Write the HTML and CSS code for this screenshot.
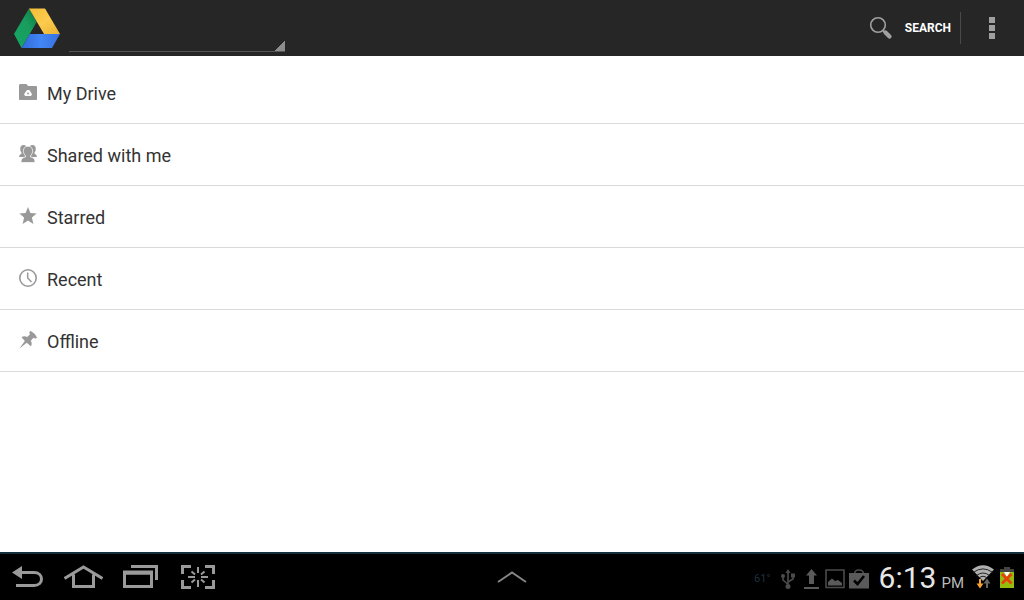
FILE: index.html
```html
<!DOCTYPE html>
<html lang="en">
<head>
  <meta charset="UTF-8" />
  <meta name="viewport" content="width=device-width, initial-scale=1" />
  <title>Drive</title>
  <link rel="stylesheet" href="styles.css">
</head>
<body>

<header class="action-bar">
  <svg class="logo" width="46" height="40" viewBox="0 0 46 40">
    <defs>
      <linearGradient id="green" x1="0" y1="1" x2="1" y2="0">
        <stop offset="0" stop-color="#16a765" />
        <stop offset="0.6" stop-color="#189c5c" />
        <stop offset="1" stop-color="#0d7443" />
      </linearGradient>
      <linearGradient id="yellow" x1="0" y1="0" x2="1" y2="1">
        <stop offset="0" stop-color="#f3bd38" />
        <stop offset="0.5" stop-color="#fdcb4d" />
        <stop offset="1" stop-color="#e9b234" />
      </linearGradient>
      <linearGradient id="blue" x1="0" y1="0" x2="1" y2="0">
        <stop offset="0" stop-color="#2f6bd6" />
        <stop offset="0.5" stop-color="#4285f4" />
        <stop offset="1" stop-color="#3771e0" />
      </linearGradient>
    </defs>
    <path d="M15 .5 22.700 14 7.500 40 0 26z" fill="url(#green)" />
    <path d="M15 .5H31L46 26H30z" fill="url(#yellow)" />
    <path d="M15.700 26H46L38 40H7.500z" fill="url(#blue)" />
  </svg>
  <select class="account" aria-label="Account">
    <option></option>
  </select>
  <button class="search">
    <svg width="24" height="24" viewBox="0 0 24 24">
      <circle cx="9" cy="9" r="7.300" fill="none" stroke="#a0a0a0" stroke-width="1.600" />
      <path d="M14 14.500l2 2" stroke="#a0a0a0" stroke-width="2" />
      <path d="M16.500 16.500l4 4" stroke="#a0a0a0" stroke-width="4.200" stroke-linecap="round" />
    </svg>
    <span>SEARCH</span>
  </button>
  <button class="overflow" aria-label="More options">
    <svg width="6" height="22" viewBox="0 0 6 22" fill="#a0a0a0">
      <path d="M0 0h6v6H0zM0 8h6v6H0zM0 16h6v6H0z" />
    </svg>
  </button>
</header>

<main class="content">
  <ul class="folders">
    <li><a href="#">
      <svg width="18" height="18" viewBox="0 0 18 18" fill="#999">
        <path d="M0 2.500Q0 1 1 1H7.500L9 3H17Q18 3 18 4V16Q18 17 17 17H1Q0 17 0 16z" />
        <path d="M8 7H10.500L13 11.200 12 13H6.200L5 11.200z" fill="#fff" />
        <path d="M9 9 10.300 11.200H7.800z" />
      </svg>
      My Drive
    </a></li>
    <li><a href="#">
      <svg width="18" height="18" viewBox="0 0 18 18" fill="#999">
        <path d="M4.500 0C7 0 8 1.500 7.500 4.500L6 9V12H0Q0 9.500 2.500 8.500V7.500Q1 5.500 1.200 3.500 1.500 0 4.500 0z" />
        <path d="M13.500 0C11 0 10 1.500 10.500 4.500L12 9V12H18Q18 9.500 15.500 8.500V7.500Q17 5.500 16.800 3.500 16.500 0 13.500 0z" />
        <path d="M9 1.200C12 1.200 13.800 3.200 13.600 6.300 13.500 8.300 12.600 9.500 11.600 10.800V12C14.700 12.800 15.900 13.600 16 17.500H2C2.100 13.600 3.300 12.800 6.400 12V10.800C5.400 9.500 4.500 8.300 4.400 6.300 4.200 3.200 6 1.200 9 1.200z" stroke="#fff" stroke-width="0.700" />
      </svg>
      Shared with me
    </a></li>
    <li><a href="#">
      <svg width="18" height="18" viewBox="0 0 18 18" fill="#999">
        <path d="M9 0 11.400 6 17.700 6.400 12.900 10.600 14.400 17 9 13.600 3.600 17 5.100 10.600 .3 6.400 6.600 6z" />
      </svg>
      Starred
    </a></li>
    <li><a href="#">
      <svg width="18" height="18" viewBox="0 0 18 18" fill="none" stroke="#999">
        <circle cx="9" cy="9" r="8.200" stroke-width="1.600" />
        <path d="M8.700 3.500V9L12.500 13" stroke-width="1.500" />
      </svg>
      Recent
    </a></li>
    <li><a href="#">
      <svg width="18" height="18" viewBox="0 0 18 18" fill="#999">
        <path d="M11.200 0C13.500 .5 17.300 4 18 7 16.800 7.800 15.500 7.500 14.500 6.800L11.800 9.700C13 11.500 13 13.700 11.900 15.200L7.700 11.800 .3 17.700 5.800 9.900 2.500 6.300C4.200 5 6.500 5.100 8.200 6.100L11 3.300C10.200 2.200 10.200 .8 11.200 0z" />
      </svg>
      Offline
    </a></li>
  </ul>
</main>

<footer class="system-bar">
  <nav class="nav-keys">
    <button aria-label="Back">
      <svg width="32" height="24" viewBox="0 0 32 24">
        <path d="M8 7.500H22C32 7.500 32 20.500 22 20.500H4" fill="none" stroke="#9a9a9a" stroke-width="3" />
        <path d="M0 7.500 10 1V14z" fill="#9a9a9a" />
      </svg>
    </button>
    <button aria-label="Home">
      <svg width="39" height="24" viewBox="0 0 39 24" fill="none" stroke="#9a9a9a" stroke-width="3">
        <path d="M.5 13.500 19.500 2 38.500 13.500M9.500 9.500V21.500H29.500V9.500" />
      </svg>
    </button>
    <button aria-label="Recent apps">
      <svg width="35" height="24" viewBox="0 0 35 24" fill="none" stroke="#9a9a9a" stroke-width="3">
        <path d="M8 1.500H33.500V15" />
        <path d="M1.500 8H28.500V21.500H1.500z" />
        <path d="M0 7.500H30" stroke-width="4" />
      </svg>
    </button>
    <button aria-label="Screenshot">
      <svg width="34" height="24" viewBox="0 0 34 24" fill="none" stroke="#9a9a9a">
        <path d="M1.500 9V1.500H10M24 1.500H32.500V9M32.500 15V22.500H24M10 22.500H1.500V15" stroke-width="3" />
        <path d="M17 2V8M17 15V22M7 12H14M20 12H27M10.500 6.500 14 9.500M23.500 6.500 20 9.500M10.500 17.500 14 14.500M23.500 17.500 20 14.500" stroke-width="2" />
      </svg>
    </button>
  </nav>

  <button class="tray" aria-label="Open tray">
    <svg width="30" height="12" viewBox="0 0 30 12" fill="none" stroke="#858585" stroke-width="2">
      <path d="M1 11 15 1.500 29 11" />
    </svg>
  </button>

  <div class="status">
    <span class="temp">61°</span>
    <svg width="14" height="20" viewBox="0 0 14 20" fill="#4b4b4b">
      <path d="M7 2V17M7 15.500 2 11V7M7 13 12 10V6" fill="none" stroke="#4b4b4b" stroke-width="1.600" />
      <path d="M7 0 9.500 4H4.500zM10 4.500h4v4h-4z" />
      <circle cx="2" cy="7" r="2" />
      <circle cx="7" cy="17.500" r="2.500" />
    </svg>
    <svg class="upload" width="15" height="20" viewBox="0 0 15 20" fill="#5a5a5a">
      <path d="M7.500 0 13 6.500H10V15H5V6.500H2zM0 18h15v2H0z" />
    </svg>
    <svg width="20" height="20" viewBox="0 0 20 20">
      <path d="M1 1H19V18.500H1z" fill="none" stroke="#4b4b4b" stroke-width="1.600" />
      <path d="M3 16.500V13L7 9.500 10 12 13 11 17 14V16.500z" fill="#5a5a5a" />
    </svg>
    <svg width="20" height="20" viewBox="0 0 20 20">
      <path d="M5.500 5C5.500 -.5 14.500 -.5 14.500 5" fill="none" stroke="#4b4b4b" stroke-width="1.500" />
      <path d="M0 4H20V19.500H0z" fill="#5a5a5a" />
      <path d="M5 11.500 8.500 15 15 7" fill="none" stroke="#000" stroke-width="2.600" />
    </svg>
    <span class="clock">6:13<small>PM</small></span>
    <svg class="wifi" width="22" height="24" viewBox="0 0 22 24" fill="none">
      <path d="M0 4.500Q11 -4 22 4.500L11 16z" fill="#b0b0b0" />
      <path d="M1.500 7.300Q11 .5 20.500 7.300M4.500 10.500Q11 5.500 17.500 10.500M7 13Q11 9.500 15 13" stroke="#222" stroke-width="1" />
      <path d="M8 14V20" stroke="#f7a233" stroke-width="2" />
      <path d="M4.500 18.500H11.500L8 23.500z" fill="#f7a233" />
      <path d="M15 17V23" stroke="#666" stroke-width="2" />
      <path d="M11.500 18.500 15 13.500 18.500 18.500z" fill="#666" />
    </svg>
    <svg class="battery" width="14" height="22" viewBox="0 0 14 22">
      <path d="M4 0H10V2H14V5H0V2H4z" fill="#444" />
      <path d="M0 5H14V21H0z" fill="#93bd0c" />
      <path d="M4 5H10L7 10z" fill="#fff" />
      <path d="M2 7 11.500 16.500M11.500 7 2 16.500" stroke="#e8400c" stroke-width="2.800" />
    </svg>
  </div>
</footer>

</body>
</html>
```
FILE: styles.css
```css
* {
  box-sizing: border-box;
}

body {
  margin: 0;
  min-height: 100vh;
  display: flex;
  flex-direction: column;
  font-family: Roboto, sans-serif;
  background: #fff;
  color: #333;
}

svg {
  display: block;
  flex: none;
}

button {
  display: flex;
  align-items: center;
  padding: 0;
  border: none;
  background: none;
  color: #fff;
  font-family: inherit;
  cursor: pointer;
}

/* top bar */
.action-bar {
  display: flex;
  align-items: center;
  height: 56px;
  padding-left: 14px;
  background: #262626;
}

.account {
  appearance: none;
  width: 216px;
  height: 44px;
  margin: 4px auto 0 9px;
  border: none;
  border-bottom: 1px solid #555;
  border-radius: 0;
  background: linear-gradient(to bottom right, transparent 50%, #8c8c8c 50%) no-repeat right bottom / 12px 12px;
  background-origin: border-box;
  background-clip: border-box;
  color: #fff;
  font: 18px Roboto, sans-serif;
}

.search {
  height: 32px;
  gap: 12px;
  padding-right: 9px;
  border-right: 1px solid #4a4a4a;
  font-size: 12px;
  font-weight: bold;
}

.overflow {
  justify-content: center;
  width: 63px;
  height: 56px;
  padding-right: 2px;
}

/* folder list */
.content {
  flex: 1;
  padding-top: 6px;
}

.folders {
  margin: 0;
  padding: 0;
  list-style: none;
}

.folders a {
  display: flex;
  align-items: center;
  gap: 10px;
  height: 62px;
  padding: 2px 19px 0;
  border-bottom: 1px solid #d9d9d9;
  color: #333;
  font-size: 18px;
  text-decoration: none;
}

.folders svg {
  margin-bottom: 3px;
}

/* bottom bar */
.system-bar {
  display: grid;
  grid-template-columns: 1fr auto 1fr;
  align-items: center;
  height: 48px;
  padding: 0 10px 4px;
  border-top: 2px solid #12303c;
  background: #000;
}

.nav-keys {
  display: flex;
  gap: 20px;
  padding-left: 2px;
}

.nav-keys button:last-child {
  margin-left: 3px;
}

.status {
  display: flex;
  align-items: center;
  justify-content: flex-end;
  gap: 4px;
}

.status > svg {
  margin-top: 4px;
}

.temp {
  margin: 4px 6px 0 0;
  color: #1b3242;
  font-size: 11px;
}

.upload {
  margin: 0 2px 0 5px;
}

.clock {
  margin-left: 6px;
  padding-top: 8px;
  color: #e6e6e6;
  font-size: 30px;
  line-height: 32px;
  white-space: nowrap;
}

.clock small {
  margin-left: 5px;
  color: #bbb;
  font-size: 15px;
}

.status > .wifi {
  margin: 0 2px 0 4px;
}

.status > .battery {
  margin-top: 2px;
}
```
